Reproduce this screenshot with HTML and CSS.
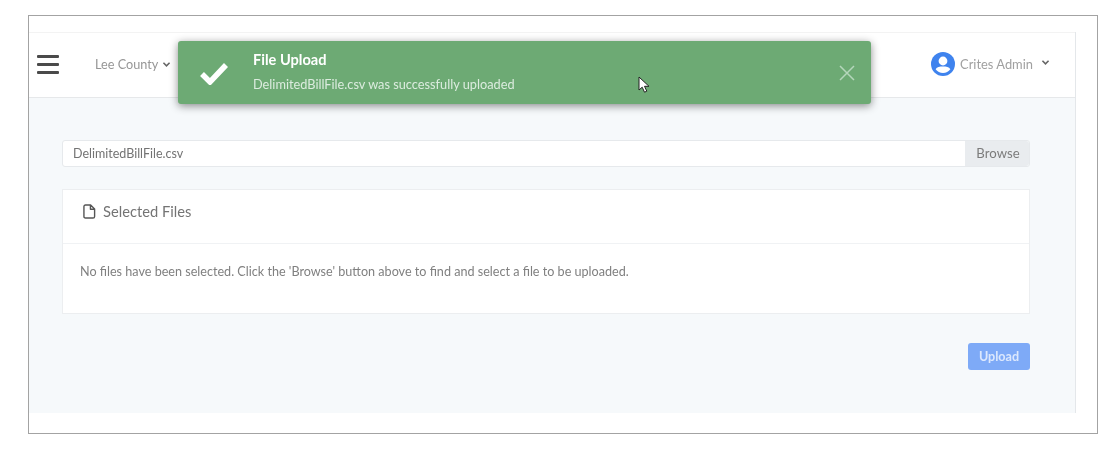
FILE: index.html
```html
<!DOCTYPE html>
<html lang="en">
<head>
<meta charset="utf-8">
<title>File Upload</title>
<link rel="stylesheet" href="styles.css">
</head>
<body>
<div class="frame">
  <div class="app">
    <header class="nav">
      <div class="burger"><span></span><span></span><span></span></div>
      <div class="county">Lee County
        <svg class="chev" viewBox="0 0 10 8"><path d="M1.5 2 5 5.5 8.5 2" fill="none" stroke="#666" stroke-width="1.8"/></svg>
      </div>
      <div class="user">
        <svg class="avatar" viewBox="0 0 24 24"><circle cx="12" cy="12" r="12" fill="#3f83ee"/><circle cx="12" cy="9" r="4.4" fill="#fff"/><path d="M4.6 17.2C6 14.8 8.6 14.4 12 14.4s6 .4 7.4 2.8C17.6 19.6 15 21 12 21s-5.6-1.4-7.4-3.8z" fill="#fff"/></svg>
        <span class="user-name">Crites Admin</span>
        <svg class="chev chev-user" viewBox="0 0 10 8"><path d="M1.5 2 5 5.5 8.5 2" fill="none" stroke="#666" stroke-width="1.8"/></svg>
      </div>
    </header>
    <main class="content">
      <div class="file-input">
        <div class="file-name">DelimitedBillFile.csv</div>
        <div class="browse">Browse</div>
      </div>
      <section class="card">
        <div class="card-head">
          <svg class="doc" viewBox="0 0 14 16"><path d="M2.6 1h5.6L12.5 5.3v8a1.7 1.7 0 0 1-1.7 1.7H2.6A1.6 1.6 0 0 1 1 13.300V2.600A1.600 1.600 0 0 1 2.600 1zM8 1v4.500h4.500" fill="none" stroke="#555" stroke-width="1.500" stroke-linejoin="round"/></svg>
          <span>Selected Files</span>
        </div>
        <div class="card-body">No files have been selected. Click the 'Browse' button above to find and select a file to be uploaded.</div>
      </section>
      <div class="actions"><button class="upload" type="button">Upload</button></div>
    </main>
  </div>
  <div class="toast">
    <svg class="check" viewBox="0 0 30 24"><path d="M3 13 11 21 27 4" fill="none" stroke="#fff" stroke-width="5.500"/></svg>
    <div class="toast-text">
      <div class="toast-title">File Upload</div>
      <div class="toast-msg">DelimitedBillFile.csv was successfully uploaded</div>
    </div>
    <svg class="close" viewBox="0 0 16 16"><path d="M1 1 15 15M15 1 1 15" fill="none" stroke="#b5d6bb" stroke-width="1.500"/></svg>
  </div>
  <svg class="cursor" viewBox="0 0 12 18"><path d="M1 1v13l3.200-2.800 2.300 5 2.300-1-2.300-4.900H11z" fill="#fff" stroke="#222" stroke-width="1"/></svg>
</div>
</body>
</html>
```
FILE: styles.css
```css
* { box-sizing: border-box; }
html, body { margin: 0; height: 100%; background: #fff; overflow: hidden; }
body {
  padding: 15px 14px 0 28px;
  font-family: "Lato", "Open Sans", "Liberation Sans", sans-serif;
  color: #666;
}
.frame {
  position: relative;
  width: 1070px;
  height: 419px;
  border: 1px solid #a3a3a3;
  padding-top: 16px;
}
.app {
  width: 1047px;
  height: 381px;
  background: #f6f9fb;
  border-right: 1px solid #e4e7ea;
  display: flex;
  flex-direction: column;
  filter: blur(0.7px);
}
.nav {
  height: 66px;
  flex: none;
  background: #fff;
  border-top: 1px solid #f3f3f3;
  border-bottom: 1px solid #e6e8ea;
  display: flex;
  align-items: center;
  padding: 0 25px 0 8px;
}
.burger { width: 22px; display: flex; flex-direction: column; gap: 5px; margin-bottom: 1px; }
.burger span { display: block; height: 3px; border-radius: 1px; background: #4a4a4a; }
.county {
  margin-left: 36px;
  font-size: 12.700px;
  color: #969696;
  display: flex;
  align-items: center;
  gap: 4px;
  margin-bottom: 2px;
}
.chev { width: 9px; height: 7px; }
.user { margin-left: auto; display: flex; align-items: center; margin-bottom: 2px; }
.avatar { width: 24px; height: 24px; }
.user-name { margin-left: 5px; font-size: 12.900px; color: #a0a0a0; }
.chev-user { margin-left: 8px; margin-bottom: 3px; }
.content {
  flex: 1;
  padding: 42px 45px 0 33px;
  display: flex;
  flex-direction: column;
}
.file-input {
  height: 27px;
  flex: none;
  display: flex;
  background: #fff;
  border: 1px solid #e6e9ec;
  border-radius: 3px;
  font-size: 12.500px;
}
.file-name { flex: 1; padding-left: 10px; line-height: 25px; color: #737373; }
.browse { width: 64px; padding-left: 2px; background: #e9ecef; text-align: center; font-size: 13.200px; line-height: 25px; color: #7c7c7c; border-radius: 0 3px 3px 0; }
.card {
  margin-top: 22px;
  height: 125px;
  flex: none;
  background: #fff;
  border: 1px solid #eceef0;
  display: flex;
  flex-direction: column;
}
.card-head {
  height: 54px;
  flex: none;
  border-bottom: 1px solid #f0f2f4;
  display: flex;
  align-items: flex-start;
  padding: 12px 0 0 20px;
  font-size: 14.700px;
  color: #747474;
}
.doc { width: 13px; height: 15px; margin: 2px 7px 0 0; }
.card-body { padding-top: 20px; padding-left: 17px; font-size: 12.600px; color: #808080; }
.actions { margin-top: 29px; display: flex; justify-content: flex-end; }
.upload {
  width: 62px;
  height: 27px;
  border: 0;
  border-radius: 3px;
  background: #7eaaf7;
  color: #dce8fd;
  font: 700 12.600px "Lato", "Liberation Sans", sans-serif;
  padding: 0;
}
.toast {
  position: absolute;
  left: 149px;
  top: 25px;
  width: 693px;
  height: 63px;
  background: #6daa74;
  border-radius: 3px;
  box-shadow: 0 2px 8px rgba(0, 0, 0, 0.45);
  display: flex;
  align-items: center;
  color: #fff;
  filter: blur(0.6px);
}
.check { width: 30px; height: 24px; margin-left: 21px; margin-top: 1px; }
.toast-text { margin-left: 24px; }
.toast-title { font-size: 14.600px; font-weight: 700; margin-top: -3px; }
.toast-msg { font-size: 12.750px; color: #dcecdf; margin-top: 8px; }
.close { position: absolute; right: 16px; top: 24px; width: 16px; height: 16px; }
.cursor { position: absolute; left: 609px; top: 60px; width: 12px; height: 18px; filter: blur(0.4px); }
```
